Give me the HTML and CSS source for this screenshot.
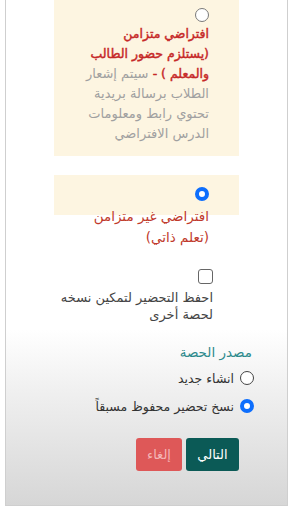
FILE: index.html
```html
<!DOCTYPE html>
<html lang="ar">
<head>
<meta charset="utf-8">
<link rel="stylesheet" href="styles.css">
</head>
<body>
<div class="frame">
  <div class="content">
    <div class="opt opt-sync">
      <span class="radio"></span>
      <p class="opt-text"><span class="red-b">افتراضي متزامن<br>(يستلزم حضور الطالب<br>والمعلم ) -</span> <span class="muted">سيتم إشعار<br>الطلاب برسالة بريدية<br>تحتوي رابط ومعلومات<br>الدرس الافتراضي</span></p>
    </div>
    <div class="opt opt-async">
      <span class="radio radio-on"></span>
      <p class="opt-text2">افتراضي غير متزامن<br>(تعلم ذاتي)</p>
    </div>
    <div class="save">
      <span class="check"></span>
      <p class="save-text">احفظ التحضير لتمكين نسخه<br>لحصة أخرى</p>
    </div>
    <div class="source">
      <h3 class="source-title">مصدر الحصة</h3>
      <div class="row"><span class="radio radio-dark"></span><span>انشاء جديد</span></div>
      <div class="row"><span class="radio radio-on"></span><span>نسخ تحضير محفوظ مسبقاً</span></div>
    </div>
    <div class="actions">
      <button class="btn btn-next">التالي</button>
      <button class="btn btn-cancel">إلغاء</button>
    </div>
  </div>
</div>
</body>
</html>
```
FILE: styles.css
```css
* { box-sizing: border-box; }
html, body { margin: 0; padding: 0; background: #fff; }
body { font-family: "DejaVu Sans", "Noto Sans", sans-serif; }
.frame {
  margin-left: 5px;
  width: 283px;
  height: 506px;
  border: 1px solid #cfcfcf;
  border-top: none;
  background: linear-gradient(to bottom, #fff 0, #fff 330px, #f0f0f0 390px, #d6d6d6 506px);
}
.content { direction: rtl; padding: 0 48px; }
.opt { background: #fdf5e1; }
.opt-sync { height: 156px; padding: 8px 30px 0 6px; }
.radio {
  display: block;
  width: 14px; height: 14px;
  border-radius: 50%;
  border: 1.5px solid #7a7a7a;
  background: #fff;
  flex: none;
}
.radio-on { border: 4px solid #0d6efd; }
.radio-dark { border-color: #444; }
.opt-text {
  margin: 2px 0 0;
  font-size: 13px;
  line-height: 20px;
  white-space: nowrap;
}
.red-b {
  color: #c62828;
  font-size: 12.5px;
  -webkit-text-stroke: 0.45px #c62828;
}
.muted { color: #a0a0a0; }
.opt-async { margin-top: 19px; height: 40px; padding: 12px 30px 0 6px; }
.opt-text2 {
  margin: 5px 0 0;
  color: #c0392b;
  font-size: 13.5px;
  line-height: 21px;
  white-space: nowrap;
}
.save { margin-top: 54px; padding-right: 26px; }
.check {
  display: block;
  width: 15px; height: 15px;
  border: 1.5px solid #666;
  border-radius: 3px;
  background: #fff;
}
.save-text {
  margin: 5px 0 0;
  font-size: 13px;
  line-height: 17px;
  color: #444;
  white-space: nowrap;
}
.source { margin-top: 19px; margin-right: -15px; }
.source-title {
  margin: 0 2px 2px 0;
  font-size: 13.5px;
  font-weight: normal;
  line-height: 20px;
  color: #2d8a8c;
}
.row {
  display: flex;
  align-items: center;
  gap: 6px;
  height: 28px;
  font-size: 12.5px;
  color: #333;
  white-space: nowrap;
}
.actions { margin-top: 18px; display: flex; gap: 4px; }
.btn {
  height: 33px;
  border: none;
  border-radius: 3px;
  font-family: inherit;
  font-size: 13px;
  font-weight: normal;
  padding: 0;
}
.btn-next { width: 53px; background: #0b5a56; color: #fff; }
.btn-cancel { width: 46px; background: #de5858; color: #f4b6b6; }
```
